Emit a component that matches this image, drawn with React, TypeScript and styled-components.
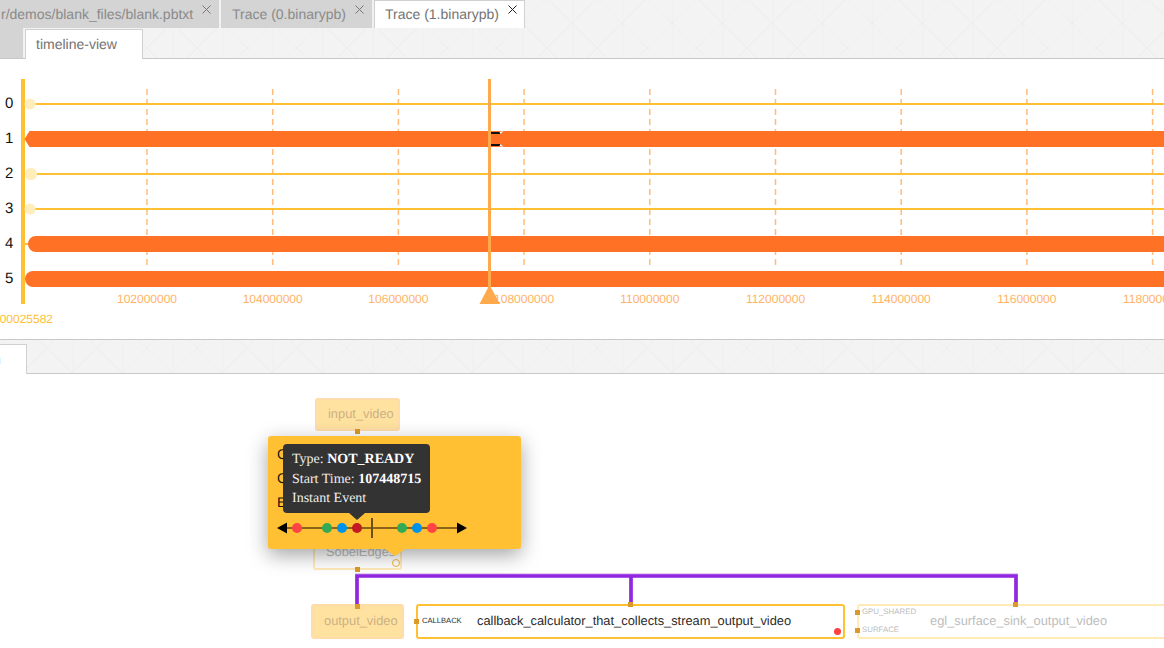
import React from "react"
import styled, { createGlobalStyle } from "styled-components"

const GlobalStyle = createGlobalStyle`
  html, body {
    margin: 0;
    padding: 0;
    height: 100%;
    overflow: hidden;
  }
  body {
    font-family: "Liberation Sans", Arial, sans-serif;
    text-rendering: geometricPrecision;
  }
`

const Page = styled.div`
  width: 1164px;
  height: 648px;
  display: flex;
  flex-direction: column;
  overflow: hidden;
  background-color: #f3f3f3;
  background-image:
    linear-gradient(45deg, transparent calc(50% - 0.5px), #ededed 50%, transparent calc(50% + 0.5px)),
    linear-gradient(-45deg, transparent calc(50% - 0.5px), #ededed 50%, transparent calc(50% + 0.5px)),
    linear-gradient(90deg, #f1f1f1 2px, transparent 2px);
  background-size: 50px 50px;
  background-position: 22px 23px;
  background-attachment: fixed;
`

const TabBar = styled.div<{ $height: number; $top?: boolean; $bottom?: boolean; $gap?: number }>`
  flex: none;
  height: ${(p) => p.$height}px;
  box-sizing: border-box;
  display: flex;
  align-items: flex-end;
  gap: ${(p) => p.$gap ?? 2}px;
  border-top: ${(p) => (p.$top ? "1px solid #c8c8c8" : "none")};
  border-bottom: ${(p) => (p.$bottom ? "1px solid #c8c8c8" : "none")};
`

const Tab = styled.div<{ $active?: boolean; $shift?: number; $width: number; $height: number; $stick?: boolean }>`
  position: relative;
  flex: none;
  width: ${(p) => p.$width}px;
  height: ${(p) => p.$height}px;
  box-sizing: border-box;
  margin-left: ${(p) => p.$shift ?? 0}px;
  margin-bottom: ${(p) => (p.$stick ? -1 : 0)}px;
  padding: 0 0 2px 10px;
  display: flex;
  align-items: center;
  font-size: 14px;
  white-space: nowrap;
  color: ${(p) => (p.$active ? "#737373" : "#8a8a8a")};
  background: ${(p) => (p.$active ? "#fff" : "#d4d4d4")};
  border: 1px solid ${(p) => (p.$active ? "#d0d0d0" : "#d4d4d4")};
  border-bottom: none;
`

const StubTab = styled.div`
  flex: none;
  width: 23px;
  height: 30px;
  background: #d4d4d4;
`

const CloseMark = styled.svg<{ $active?: boolean }>`
  position: absolute;
  top: 4px;
  right: 7px;
  width: 9px;
  height: 9px;
  stroke: ${(p) => (p.$active ? "#222" : "#777")};
  stroke-width: 1;
  fill: none;
`

const TimelinePanel = styled.section`
  flex: none;
  height: 280px;
  background: #fff;
`

const Chart = styled.svg`
  display: block;
  width: 1164px;
  height: 280px;
  font-family: "Liberation Sans", Arial, sans-serif;
`

const GraphCanvas = styled.section`
  position: relative;
  flex: 1;
  background: #fff;
  overflow: hidden;
`

const Edges = styled.svg`
  position: absolute;
  left: 0;
  top: 0;
  width: 1164px;
  height: 274px;
`

const Node = styled.div<{ $x: number; $y: number; $w: number; $h: number; $kind: "stream" | "active" | "dim" }>`
  position: absolute;
  left: ${(p) => p.$x}px;
  top: ${(p) => p.$y - 374}px;
  width: ${(p) => p.$w}px;
  height: ${(p) => p.$h}px;
  box-sizing: border-box;
  border-radius: 3px;
  font-size: 12.85px;
  line-height: ${(p) => p.$h - 6}px;
  white-space: nowrap;
  border: 2px solid
    ${(p) => (p.$kind === "stream" ? "#ffdcaa" : p.$kind === "active" ? "#ffc033" : "#ffeab8")};
  background: ${(p) => (p.$kind === "stream" ? "#ffe29f" : "#fff")};
  color: ${(p) => (p.$kind === "stream" ? "#cbb185" : p.$kind === "active" ? "#2b2b2b" : "#bdbdbd")};
`

const NodeTitle = styled.span<{ $pad: number }>`
  display: block;
  padding-left: ${(p) => p.$pad}px;
`

const Port = styled.i<{ $x: number; $y: number }>`
  position: absolute;
  left: ${(p) => p.$x}px;
  top: ${(p) => p.$y - 374}px;
  width: 5px;
  height: 5px;
  background: #d9992b;
`

const PortLabel = styled.span<{ $x: number; $y: number; $dim?: boolean }>`
  position: absolute;
  left: ${(p) => p.$x}px;
  top: ${(p) => p.$y - 374}px;
  font-size: ${(p) => (p.$dim ? 7.85 : 7.6)}px;
  line-height: 10px;
  color: ${(p) => (p.$dim ? "#bdbdbd" : "#2b2b2b")};
`

const StatusDot = styled.i<{ $x: number; $y: number; $ring?: boolean }>`
  position: absolute;
  left: ${(p) => p.$x - 4}px;
  top: ${(p) => p.$y - 374 - 4}px;
  width: ${(p) => (p.$ring ? 8 : 7)}px;
  height: ${(p) => (p.$ring ? 8 : 7)}px;
  box-sizing: border-box;
  border-radius: 50%;
  background: ${(p) => (p.$ring ? "#fff" : "#ff4040")};
  border: ${(p) => (p.$ring ? "1.5px solid #f2b33a" : "none")};
`

const Popup = styled.div`
  position: absolute;
  left: 268px;
  top: 62px;
  width: 253px;
  height: 113px;
  box-sizing: border-box;
  padding: 6px 9px 0;
  background: #ffc033;
  border-radius: 3px;
  box-shadow: 0 6px 20px rgba(0, 0, 0, 0.36);
  &::after {
    content: "";
    position: absolute;
    left: 117px;
    top: 113px;
    border: 10px solid transparent;
    border-top: 7px solid #ffc033;
    border-bottom: none;
  }
`

const PopupLine = styled.div`
  font-size: 14px;
  line-height: 24px;
  color: #111;
  white-space: nowrap;
`

const Tooltip = styled.div`
  position: absolute;
  left: 15px;
  top: 8px;
  width: 147px;
  height: 69px;
  box-sizing: border-box;
  padding: 6px 9px;
  background: #333;
  border-radius: 4px;
  color: #eee;
  font-family: "Liberation Serif", "Times New Roman", serif;
  font-size: 14px;
  line-height: 19.6px;
  white-space: nowrap;
  b {
    color: #fff;
  }
  &::after {
    content: "";
    position: absolute;
    left: 66px;
    top: 69px;
    border: 8px solid transparent;
    border-top: 7px solid #333;
    border-bottom: none;
  }
`

const EventStrip = styled.svg`
  position: absolute;
  left: 9px;
  top: 80px;
  width: 190px;
  height: 24px;
`

const tabs = [
  { label: "r/demos/blank_files/blank.pbtxt", shift: -10, width: 229 },
  { label: "Trace (0.binarypb)", width: 151 },
  { label: "Trace (1.binarypb)", width: 151, active: true },
]

const ticks = [147, 272.7, 398.4, 524.1, 649.8, 775.5, 901.2, 1026.9, 1152.6]
const tickLabels = ["102000000", "104000000", "106000000", "108000000", "110000000", "112000000", "114000000", "116000000", "118000000"]
const ORANGE = "#ff7226"
const YELLOW = "#ffc033"

// all y values below are relative to the top of the timeline panel (y = 59)
const Timeline = () => (
  <Chart viewBox="0 0 1164 280">
    {ticks.map((x) => (
      <line key={x} x1={x} x2={x} y1={30} y2={210} stroke="#ffbc7a" strokeWidth={1.5} strokeDasharray="6 4" />
    ))}

    <rect x={21} y={20} width={4} height={225} fill={YELLOW} />

    {[0, 1, 2, 3, 4, 5].map((n) => (
      <text key={n} x={5} y={49 + n * 35} fontSize={15} fill="#111">
        {n}
      </text>
    ))}

    {/* idle rows: a pale start marker and a thin line */}
    <line x1={34} x2={1164} y1={45} y2={45} stroke={YELLOW} strokeWidth={2} />
    <circle cx={30} cy={45} r={5.5} fill="#ffeebc" />
    <line x1={36} x2={1164} y1={115} y2={115} stroke={YELLOW} strokeWidth={2} />
    <rect x={25} y={109} width={12} height={12} rx={5.5} fill="#ffeebc" />
    <line x1={34} x2={1164} y1={150} y2={150} stroke={YELLOW} strokeWidth={2} />
    <circle cx={30} cy={150} r={5.5} fill="#ffeebc" />

    {/* row 1 */}
    <path d="M24.5 80 L29.5 72 H1164 V88 H29.5 Z" fill={ORANGE} />
    <rect x={491} y={73} width={10} height={14} fill="#111" />
    <path d="M491 75 H500 L503 72 H505 V88 H503 L500 85 H491 Z" fill={ORANGE} />
    <path d="M499.5 73 L503.5 72 L500.5 75 Z M499.5 87 L503.5 88 L500.5 85 Z" fill="#fff" />
    <rect x={478} y={72} width={12} height={16} fill={ORANGE} />

    {/* row 4 */}
    <line x1={25} x2={30} y1={185} y2={185} stroke={YELLOW} strokeWidth={2} />
    <path d="M36 177 H1164 V193 H36 A8 8 0 0 1 36 177 Z" fill={ORANGE} />

    {/* row 5 */}
    <path d="M33 212 H1164 V228 H33 A8 8 0 0 1 33 212 Z" fill={ORANGE} />

    {ticks.map((x, i) => (
      <text key={x} x={x} y={244} fontSize={12} fill="#ffb266" textAnchor="middle">
        {tickLabels[i]}
      </text>
    ))}
    <text x={23} y={264} fontSize={12} fill={YELLOW} textAnchor="middle">
      100025582
    </text>

    {/* cursor */}
    <rect x={488} y={20} width={3} height={210} fill="#ffa94d" />
    <path d="M489.5 226 L500 245 H479.5 Z" fill="#ffa94d" />
  </Chart>
)

const events = [
  { x: 20, color: "#ff4444" },
  { x: 50, color: "#33aa55" },
  { x: 65, color: "#0091ea" },
  { x: 80, color: "#c21a20" },
  { x: 125, color: "#33aa55" },
  { x: 140, color: "#0091ea" },
  { x: 155, color: "#ff4444" },
]

const Graph = () => (
  <GraphCanvas>
    <Node $kind="stream" $x={315} $y={398} $w={85} $h={33}>
      <NodeTitle $pad={11}>input_video</NodeTitle>
    </Node>
    <Port $x={355} $y={429} />

    <Node $kind="dim" $x={313} $y={536} $w={89} $h={34}>
      <NodeTitle $pad={11}>SobelEdges</NodeTitle>
    </Node>
    <StatusDot $ring $x={395.5} $y={563} />

    <Node $kind="stream" $x={311} $y={604} $w={93} $h={35}>
      <NodeTitle $pad={11}>output_video</NodeTitle>
    </Node>

    <Node $kind="active" $x={416} $y={604} $w={429} $h={35}>
      <NodeTitle $pad={59}>callback_calculator_that_collects_stream_output_video</NodeTitle>
    </Node>
    <Port $x={414} $y={619} />
    <PortLabel $x={422} $y={616}>CALLBACK</PortLabel>
    <StatusDot $x={838} $y={632} />

    <Node $kind="dim" $x={857} $y={604} $w={320} $h={35}>
      <NodeTitle $pad={71}>egl_surface_sink_output_video</NodeTitle>
    </Node>
    <Port $x={855} $y={610} />
    <Port $x={855} $y={628} />
    <PortLabel $dim $x={862} $y={607}>GPU_SHARED</PortLabel>
    <PortLabel $dim $x={862} $y={625}>SURFACE</PortLabel>

    <Edges viewBox="0 374 1164 274">
      <path d="M357 604 V575.3 H1016 V604 M631 575.3 V604" fill="none" stroke="#d9bdf0" strokeWidth={4} />
      <path d="M357 604 V576 H1016 V604 M631 576 V604" fill="none" stroke="#9128df" strokeWidth={3.6} />
    </Edges>
    <Port $x={355} $y={567} />
    <Port $x={355} $y={604} />
    <Port $x={628} $y={602} />
    <Port $x={1013} $y={602} />

    <Popup>
      <PopupLine>Calls: 1</PopupLine>
      <PopupLine>CPU: 0</PopupLine>
      <PopupLine>End: 0</PopupLine>
      <Tooltip>
        Type: <b>NOT_READY</b>
        <br />
        Start Time: <b>107448715</b>
        <br />
        Instant Event
      </Tooltip>
      <EventStrip viewBox="0 0 190 24">
        <line x1={8} x2={182} y1={12} y2={12} stroke="#8a6418" strokeWidth={2} />
        <path d="M0 12 L10 6.5 V17.5 Z M190 12 L180 6.5 V17.5 Z" fill="#000" />
        <line x1={95} x2={95} y1={2} y2={22} stroke="#6d4f10" strokeWidth={2} />
        {events.map((e) => (
          <circle key={e.x} cx={e.x} cy={12} r={5} fill={e.color} />
        ))}
      </EventStrip>
    </Popup>
  </GraphCanvas>
)

export default function App() {
  return (
    <Page>
      <GlobalStyle />
      <TabBar $height={28}>
        {tabs.map((t) => (
          <Tab key={t.label} $height={28} $width={t.width} $active={t.active} $shift={t.shift}>
            {t.label}
            <CloseMark $active={t.active} viewBox="0 0 9 9">
              <path d="M0.5 0.5 L8.5 8.5 M8.5 0.5 L0.5 8.5" />
            </CloseMark>
          </Tab>
        ))}
      </TabBar>
      <TabBar $height={31} $bottom>
        <StubTab />
        <Tab $height={30} $width={118} $active $stick>
          timeline-view
        </Tab>
      </TabBar>
      <TimelinePanel>
        <Timeline />
      </TimelinePanel>
      <TabBar $height={35} $top $bottom>
        <Tab $height={30} $width={73} $active $stick $shift={-46}>
          graph
        </Tab>
      </TabBar>
      <Graph />
    </Page>
  )
}
